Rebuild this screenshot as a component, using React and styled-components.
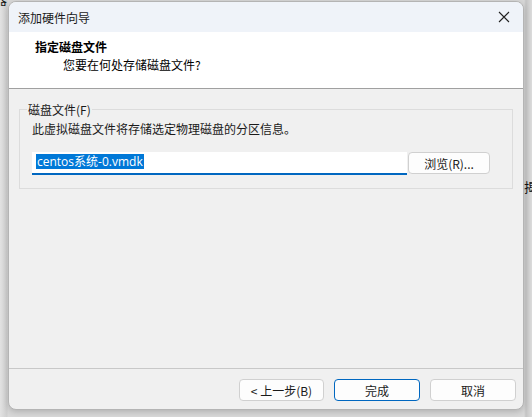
import React from "react";
import styled, { createGlobalStyle } from "styled-components";

const GlobalStyle = createGlobalStyle`
  html, body {
    margin: 0;
    padding: 0;
    background: #d4d4d4;
  }
  body {
    font-family: "Segoe UI", "Noto Sans", "Noto Sans CJK SC", sans-serif;
    font-size: 12px;
    color: #000;
  }
`;

const Desktop = styled.div`
  position: relative;
  width: 532px;
  height: 417px;
  overflow: hidden;
  background: linear-gradient(90deg, #e2e2e2 0, #cfcfcf 7px, #d8d8d8 8px, #d8d8d8 524px, #c4c4c4 526px, #dcdcdc 532px);
  padding: 1px 0 0 8px;
  box-sizing: border-box;
`;

const BackText = styled.span`
  position: absolute;
  left: ${(p) => p.x}px;
  top: ${(p) => p.y}px;
  font-family: "Noto Sans CJK SC", sans-serif;
  font-size: 13px;
  color: #111;
`;

const Window = styled.div`
  position: relative;
  width: 516px;
  height: 409px;
  background: #f0f0f0;
  border: 1px solid #b4b4b4;
  border-radius: 8px;
  box-sizing: border-box;
  overflow: hidden;
  display: flex;
  flex-direction: column;
  box-shadow: 0 2px 6px rgba(0, 0, 0, 0.18);
`;

const TitleBar = styled.div`
  height: 30px;
  flex: none;
  background: #eff3f9;
  display: flex;
  align-items: center;
  justify-content: space-between;
  padding: 0 9px 0 9px;
  font-family: "Noto Sans CJK SC", sans-serif;
  font-size: 12px;
  color: #1a1a1a;
`;

const Close = styled.svg`
  width: 12px;
  height: 12px;
  margin-right: 4px;
`;

const Header = styled.div`
  height: 57px;
  flex: none;
  background: #fff;
  border-bottom: 1px solid #a0a0a0;
  padding: 6px 0 0 26px;
  box-sizing: border-box;
  font-family: "Noto Sans CJK SC", sans-serif;
`;

const HeadTitle = styled.div`
  font-weight: bold;
  font-size: 12px;
  line-height: 18px;
`;

const HeadSub = styled.div`
  font-size: 12px;
  line-height: 18px;
  padding-left: 28px;
`;

const Body = styled.div`
  flex: 1;
  padding: 12px 10px 0 10px;
  display: flex;
  flex-direction: column;
`;

const Group = styled.fieldset`
  margin: 0;
  height: 88px;
  box-sizing: border-box;
  border: 1px solid #dcdcdc;
  padding: 2px 16px 0 12px;
`;

const Legend = styled.legend`
  padding: 0 1px;
  margin-left: -5px;
  font-family: "Noto Sans CJK SC", sans-serif;
  font-size: 12px;
  color: #1a1a1a;
`;

const Desc = styled.div`
  font-family: "Noto Sans CJK SC", sans-serif;
  font-size: 12px;
  line-height: 18px;
  color: #1a1a1a;
`;

const FileRow = styled.div`
  display: flex;
  align-items: flex-start;
  gap: 1px;
  margin-top: 14px;
`;

const PathInput = styled.div`
  width: 375px;
  height: 23px;
  box-sizing: border-box;
  background: #fff;
  border-bottom: 2px solid #0067c0;
  padding: 1px 0 0 4px;
  font-family: "Segoe UI", "Open Sans", "Noto Sans CJK SC", sans-serif;
  font-size: 12px;
`;

const Selected = styled.span`
  background: #0078d7;
  color: #fff;
  line-height: 15px;
  display: inline-block;
  padding: 0 1px;
`;

const Button = styled.button`
  width: ${(p) => p.w || 84}px;
  height: 22px;
  box-sizing: border-box;
  background: #fdfdfd;
  border: ${(p) => (p.primary ? "1px solid #0067c0" : "1px solid #d0d0d0")};
  border-radius: 4px;
  font-family: "Noto Sans CJK SC", sans-serif;
  font-size: 12px;
  color: #1a1a1a;
  padding: 0;
  display: flex;
  align-items: center;
  justify-content: center;
`;

const Footer = styled.div`
  flex: none;
  height: 41px;
  border-top: 1px solid #c8c8c8;
  display: flex;
  justify-content: flex-end;
  gap: 10px;
  padding: 10px 7px 0 0;
  box-sizing: border-box;
`;

export default function App() {
  return (
    <Desktop>
      <GlobalStyle />
      <BackText x={-6} y={-11}>器</BackText>
      <BackText x={524} y={177}>揭</BackText>
      <Window>
        <TitleBar>
          <span>添加硬件向导</span>
          <Close viewBox="0 0 12 12">
            <path d="M1 1 L11 11 M11 1 L1 11" stroke="#222" strokeWidth="1.1" fill="none" />
          </Close>
        </TitleBar>
        <Header>
          <HeadTitle>指定磁盘文件</HeadTitle>
          <HeadSub>您要在何处存储磁盘文件?</HeadSub>
        </Header>
        <Body>
          <Group>
            <Legend>磁盘文件(F)</Legend>
            <Desc>此虚拟磁盘文件将存储选定物理磁盘的分区信息。</Desc>
            <FileRow>
              <PathInput>
                <Selected>centos系统-0.vmdk</Selected>
              </PathInput>
              <Button w={82}>浏览(R)...</Button>
            </FileRow>
          </Group>
        </Body>
        <Footer>
          <Button w={85}>&lt; 上一步(B)</Button>
          <Button w={86} primary>完成</Button>
          <Button w={86}>取消</Button>
        </Footer>
      </Window>
    </Desktop>
  );
}
